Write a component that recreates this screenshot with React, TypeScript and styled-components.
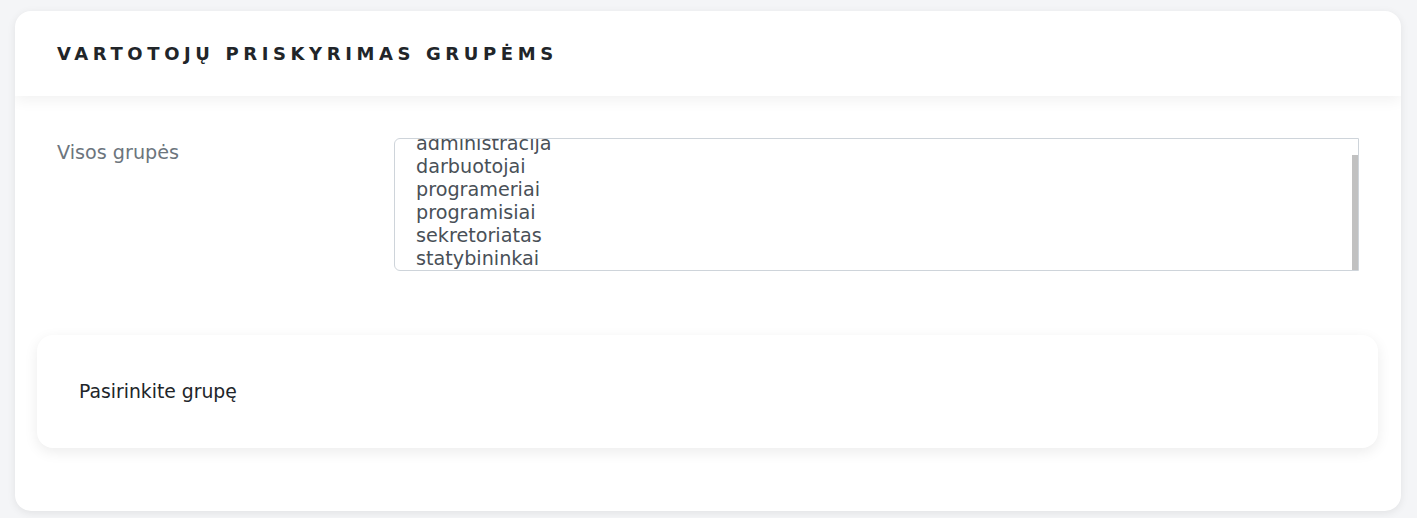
import { useEffect, useRef } from "react";
import styled, { createGlobalStyle } from "styled-components";

const GlobalStyle = createGlobalStyle`
    html, body {
        margin: 0;
        padding: 0;
        background: #f4f5f7;
        font-family: "DejaVu Sans", sans-serif;
    }
`;

const Page = styled.div`
    padding: 11px 16px 7px 15px;
`;

const Card = styled.div`
    background: #fff;
    border-radius: 16px;
    box-shadow: 0 2px 8px rgba(0, 0, 0, 0.08);
    overflow: hidden;
`;

const CardHeader = styled.div`
    height: 85px;
    display: flex;
    align-items: center;
    padding: 0 42px;
    position: relative;
    box-shadow: 0 4px 14px rgba(0, 0, 0, 0.06);
`;

const Title = styled.h2`
    margin: 0;
    font-size: 18px;
    font-weight: 700;
    letter-spacing: 4.6px;
    color: #212529;
    text-transform: uppercase;
`;

const CardBody = styled.div`
    padding: 42px 23px 63px 22px;
`;

const FormRow = styled.div`
    display: grid;
    grid-template-columns: 337px 1fr;
    padding: 0 19px 0 20px;
`;

const Label = styled.label`
    font-size: 19.2px;
    color: #6c757d;
    padding-top: 3px;
`;

// thumb drawn as a background strip: the headless browser hides real scrollbars
const ListBox = styled.select`
    height: 133px;
    box-sizing: border-box;
    border: 1px solid #ced4da;
    border-radius: 6px 0 0 6px;
    padding: 10px 19px 0;
    font-family: "DejaVu Sans", sans-serif;
    font-size: 19.2px;
    color: #495057;
    background: #fff linear-gradient(#c1c1c1, #c1c1c1) no-repeat right 0 bottom 0 / 6px 115px;
    outline: none;
    overflow-y: scroll;

    option {
        padding: 0 2px;
        line-height: 23px;
    }
`;

const InfoPanel = styled.div`
    margin-top: 64px;
    height: 113px;
    box-sizing: border-box;
    background: #fff;
    border-radius: 16px;
    box-shadow: 0 4px 14px rgba(0, 0, 0, 0.08);
    display: flex;
    align-items: center;
    padding: 0 42px;
    font-size: 18.8px;
    color: #212529;
`;

const groups = [
    "administracija",
    "darbuotojai",
    "programeriai",
    "programisiai",
    "sekretoriatas",
    "statybininkai",
];

export default function App() {
    const listRef = useRef<HTMLSelectElement>(null);

    useEffect(() => {
        const el = listRef.current;
        if (el) el.scrollTop = el.scrollHeight;
    }, []);

    return (
        <>
            <GlobalStyle/>
            <Page>
                <Card>
                    <CardHeader>
                        <Title>Vartotojų priskyrimas grupėms</Title>
                    </CardHeader>
                    <CardBody>
                        <FormRow>
                            <Label htmlFor="groups">Visos grupės</Label>
                            <ListBox id="groups" ref={listRef} multiple>
                                {groups.map((g) => (
                                    <option key={g} value={g}>{g}</option>
                                ))}
                            </ListBox>
                        </FormRow>
                        <InfoPanel>Pasirinkite grupę</InfoPanel>
                    </CardBody>
                </Card>
            </Page>
        </>
    );
}
